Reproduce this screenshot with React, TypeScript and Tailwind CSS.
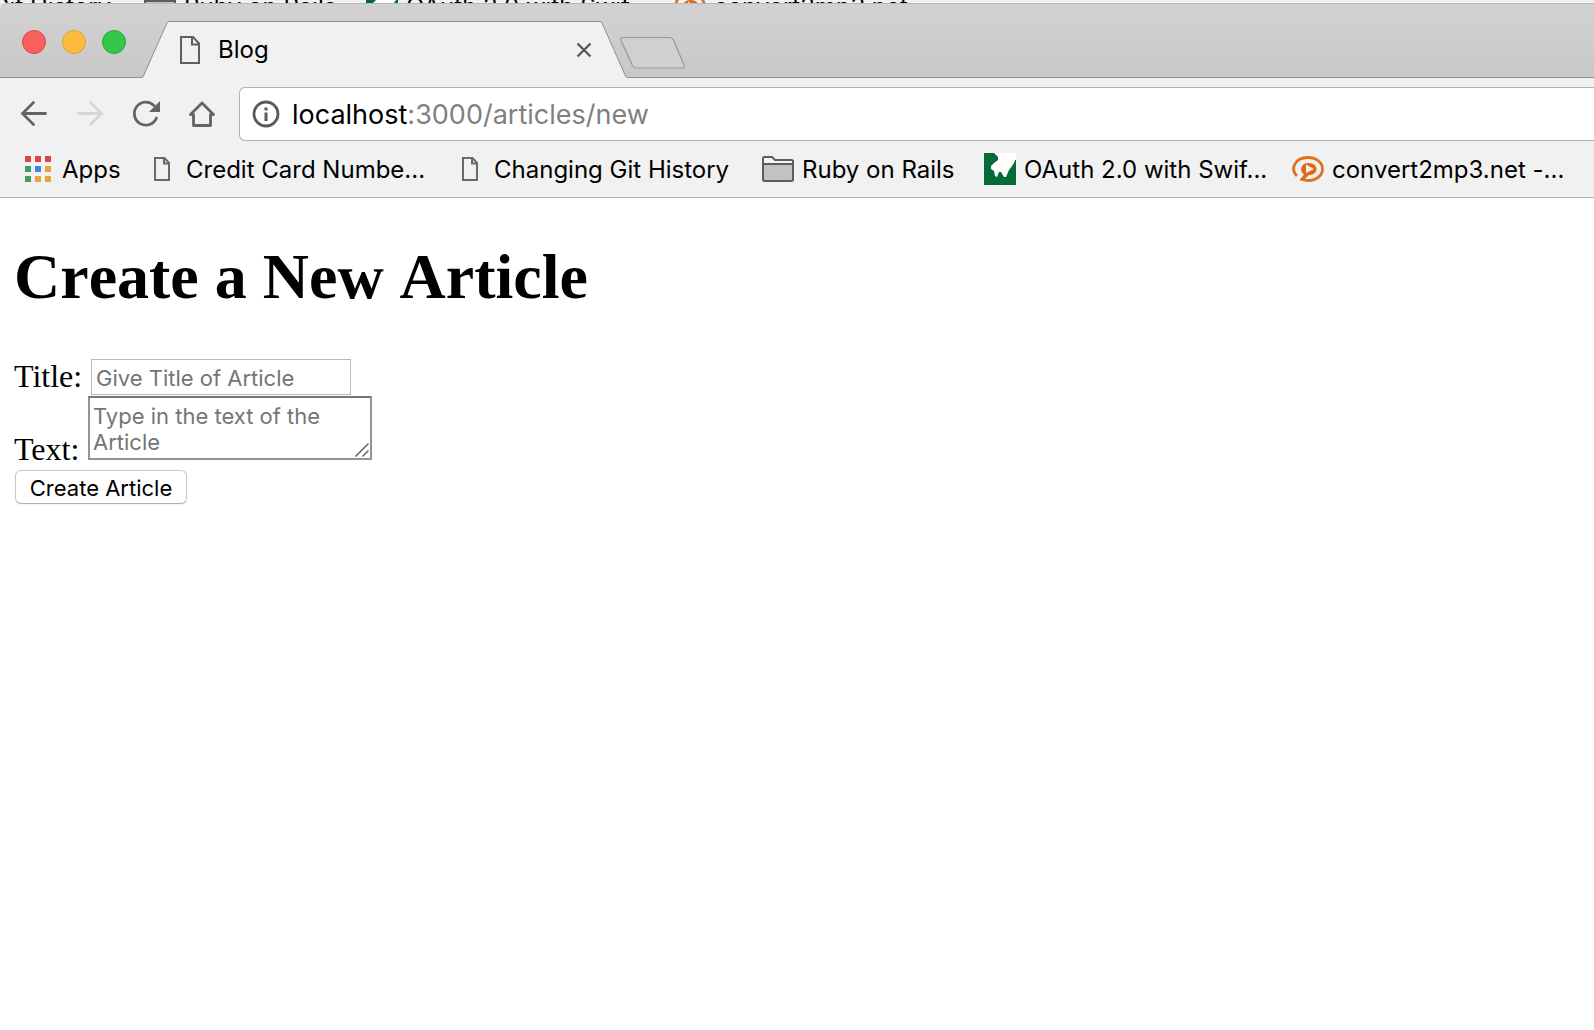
import React from "react";

function PageIcon({ className }: { className: string }) {
  return (
    <svg viewBox="0 0 20 28" className={className} fill="none" stroke="#5f5f5f" strokeWidth="2" aria-hidden="true">
      <path d="M1 1H13L19 7.500V27H1Z" />
      <path d="M12 1V8.500H19" />
    </svg>
  );
}

function SmallPageIcon() {
  return (
    <svg viewBox="0 0 16 24" className="h-6 w-4 shrink-0" fill="none" stroke="#6a6a6a" strokeWidth="2" aria-hidden="true">
      <path d="M1 1H10.500L15 6V23H1Z" />
      <path d="M10 1V6.500H15" />
    </svg>
  );
}

function AppsIcon() {
  const dots = [
    [0, 0, "#e04343"], [10, 0, "#e04343"], [20, 0, "#e04343"],
    [0, 10, "#459b62"], [10, 10, "#3a8be0"], [20, 10, "#e8a33a"],
    [0, 20, "#459b62"], [10, 20, "#e8a33a"], [20, 20, "#e8a33a"],
  ] as const;
  return (
    <svg viewBox="0 0 26 26" className="size-[26px] shrink-0" aria-hidden="true">
      {dots.map(([x, y, c]) => (
        <rect key={`${x}-${y}`} x={x} y={y} width="6" height="6" fill={c} />
      ))}
    </svg>
  );
}

function FolderIcon() {
  return (
    <svg viewBox="0 0 32 26" className="h-[26px] w-8 shrink-0" aria-hidden="true">
      <path d="M1 8V2.500Q1 1 2.500 1H10L13 4H29.500Q31 4 31 5.500V8Z" fill="#f4f4f4" />
      <path d="M1 8H31V23.500Q31 25 29.500 25H2.500Q1 25 1 23.500Z" fill="#c2c2c2" />
      <path d="M1 2.500Q1 1 2.500 1H10L13 4H29.500Q31 4 31 5.500V23.500Q31 25 29.500 25H2.500Q1 25 1 23.500ZM1 8H31" fill="none" stroke="#5c5c5c" strokeWidth="2" />
    </svg>
  );
}

function WolfIcon() {
  return (
    <svg viewBox="0 0 32 32" className="size-8 shrink-0" aria-hidden="true">
      <rect width="32" height="32" fill="#046a38" />
      <path d="M10 0L12 2L14 4V7L10 10L7 13V16L10 18L11 23L13 24L15 19H17L20 24H22L25 17L28 13L30 10L31 7H32V0Z" fill="#fff" />
    </svg>
  );
}

function ConvertIcon() {
  return (
    <svg viewBox="0 0 32 26" className="h-[26px] w-8 shrink-0" aria-hidden="true">
      <path d="M5 20C-1.500 14 1.500 1.500 16 1.500C25 1.500 30.500 7 30.500 13C30.500 19.500 24.500 24.500 16.500 24.500C14 24.500 12 24.200 10 23.500L15 18.500" fill="none" stroke="#de731f" strokeWidth="2.800" />
      <path d="M12 18.500C7 15 8.500 7 16.500 7C22 7 24.500 10 24.500 13C24.500 17 21 19 17 19L11 24.500L8 24Z" fill="#de6a17" />
      <path d="M14 8.500L22 13L14 17Z" fill="#f6efe9" />
    </svg>
  );
}

type Bookmark = { label: string; icon: React.ReactNode; item: string };

const bookmarks: Bookmark[] = [
  { label: "Credit Card Numbe...", icon: <SmallPageIcon />, item: "w-[308px] gap-4" },
  { label: "Changing Git History", icon: <SmallPageIcon />, item: "w-[300px] gap-4" },
  { label: "Ruby on Rails", icon: <FolderIcon />, item: "w-[222px] gap-2" },
  { label: "OAuth 2.0 with Swif...", icon: <WolfIcon />, item: "w-[308px] gap-2" },
  { label: "convert2mp3.net -...", icon: <ConvertIcon />, item: "w-[296px] gap-2" },
];

function BookmarkList({ items }: { items: Bookmark[] }) {
  return (
    <>
      {items.map((b) => (
        <a key={b.label} href="#" className={`flex shrink-0 items-center whitespace-nowrap ${b.item}`}>
          {b.icon}
          <span className="pt-0.5">{b.label}</span>
        </a>
      ))}
    </>
  );
}

export default function App() {
  return (
    <div className="min-h-screen overflow-hidden bg-white font-['Inter',sans-serif] text-black">
      <div className="h-[3px] overflow-hidden bg-[#f1f1f1]" aria-hidden="true">
        <div className="-mt-[22px] -ml-[156px] flex h-14 items-center text-2xl">
          <BookmarkList items={bookmarks.slice(1)} />
        </div>
      </div>

      <div className="bg-[#e4e4e4]">
        <header className="flex h-[75px] items-end rounded-tl-lg border-t border-[#b8b8b8] bg-linear-to-b from-[#d2d2d2] to-[#c8c8c9]">
          <div className="flex h-full w-[142px] shrink-0 gap-4 border-b border-[#8f8f8f] pt-[26px] pl-[22px]">
            <button aria-label="Close window" className="size-6 rounded-full border border-[#e0443f] bg-[#fc605c]" />
            <button aria-label="Minimize window" className="size-6 rounded-full border border-[#dfa035] bg-[#fdbc40]" />
            <button aria-label="Zoom window" className="size-6 rounded-full border border-[#27aa35] bg-[#34c84a]" />
          </div>
          <svg viewBox="0 0 27 57" className="h-[57px] w-[27px] shrink-0" aria-hidden="true">
            <path d="M0 57V56.500Q1 56 1.500 55L24.500 3Q25.500 0.500 27 0.500V57Z" fill="#f1f1f1" />
            <path d="M0 56.500Q1 56 1.500 55L24.500 3Q25.500 0.500 27 0.500" fill="none" stroke="#8f8f8f" />
          </svg>
          <div className="flex h-[57px] w-[431px] shrink-0 items-center border-t border-[#8f8f8f] bg-[#f1f1f1] pl-[11px]">
            <PageIcon className="h-7 w-5" />
            <span className="ml-[18px] flex-1 text-2xl">Blog</span>
            <button aria-label="Close tab" className="mr-2">
              <svg viewBox="0 0 16 16" className="size-4" stroke="#5a5a5a" strokeWidth="2.400" aria-hidden="true">
                <path d="M1.500 1.500L14.500 14.500M14.500 1.500L1.500 14.500" />
              </svg>
            </button>
          </div>
          <svg viewBox="0 0 27 57" className="h-[57px] w-[27px] shrink-0" aria-hidden="true">
            <path d="M0 57V0.500Q1.500 0.500 2.500 3L25.500 55Q26 56 27 56.500V57Z" fill="#f1f1f1" />
            <path d="M0 0.500Q1.500 0.500 2.500 3L25.500 55Q26 56 27 56.500" fill="none" stroke="#8f8f8f" />
          </svg>
          <div className="flex h-full flex-1 items-start border-b border-[#8f8f8f] pt-[33px]">
            <button aria-label="New tab" className="-ml-[7px]">
              <svg viewBox="0 0 66 32" className="h-8 w-[66px]" aria-hidden="true">
                <path d="M3 0.500H49Q52 0.500 53.500 3L64 28Q65.500 31 62 31H17Q14 31 12.500 28.500L1 3.500Q0 0.500 3 0.500Z" fill="#d0d0d0" stroke="#989898" strokeWidth="1.200" />
              </svg>
            </button>
          </div>
        </header>
      </div>

      <div className="bg-[#f1f1f1]">
        <nav className="flex h-[63px] items-end pl-5">
          <div className="flex h-[54px] w-[219px] shrink-0 items-center">
            <button aria-label="Back">
              <svg viewBox="0 0 28 28" className="size-7" fill="none" stroke="#646464" strokeWidth="2.800" strokeLinecap="round" aria-hidden="true">
                <path d="M25.500 13.500H2.500M13.500 2.500L2.500 13.500L13.500 24.500" />
              </svg>
            </button>
            <button aria-label="Forward" className="ml-7">
              <svg viewBox="0 0 28 28" className="size-7" fill="none" stroke="#d6d6d6" strokeWidth="2.800" strokeLinecap="round" aria-hidden="true">
                <path d="M2.500 13.500H25.500M14.500 2.500L25.500 13.500L14.500 24.500" />
              </svg>
            </button>
            <button aria-label="Reload" className="ml-7">
              <svg viewBox="0 0 30 28" className="h-7 w-[30px]" aria-hidden="true">
                <path d="M24.500 18A11.500 11.500 0 1 1 22 5.500" fill="none" stroke="#646464" strokeWidth="2.800" strokeLinecap="round" />
                <path d="M28 1V12H17Z" fill="#646464" />
              </svg>
            </button>
            <button aria-label="Home" className="ml-[26px]">
              <svg viewBox="0 0 28 28" className="size-7" fill="none" stroke="#646464" strokeWidth="2.800" strokeLinejoin="round" aria-hidden="true">
                <path d="M14 3L2.500 14.500H5.500V25.500H22.500V14.500H25.500Z" />
              </svg>
            </button>
          </div>
          <div className="flex h-[54px] flex-1 items-center rounded-l-md border border-r-0 border-[#b3b3b3] bg-white pl-3">
            <svg viewBox="0 0 28 28" className="size-7 shrink-0" aria-hidden="true">
              <circle cx="14" cy="14" r="12" fill="none" stroke="#5a5a5a" strokeWidth="2.800" />
              <path d="M14 12.500V21M14 7.500V10.500" stroke="#5a5a5a" strokeWidth="3" />
            </svg>
            <button aria-label="Address" className="ml-3 pt-0.5 text-[27px]">
              localhost<span className="text-[#808080]">:3000/articles/new</span>
            </button>
          </div>
        </nav>
        <nav aria-label="Bookmarks" className="flex h-[57px] items-center border-b border-[#b3b3b3] pl-[25px] text-2xl">
          <a href="#" className="flex w-[129px] shrink-0 items-center gap-[11px]">
            <AppsIcon />
            <span className="pt-0.5">Apps</span>
          </a>
          <BookmarkList items={bookmarks} />
        </nav>
      </div>

      <main className="px-3.5 pt-[42px] font-['Liberation_Serif',serif]">
        <h1 className="text-[64px] leading-[74px] font-bold [font-kerning:none]">Create a New Article</h1>
        <form className="mt-[45px] text-[32px]" onSubmit={(e) => e.preventDefault()}>
          <div className="flex items-start">
            <label htmlFor="title" className="w-[77px] leading-[34px]">Title:</label>
            <input
              id="title"
              type="text"
              placeholder="Give Title of Article"
              className="h-9 w-[260px] border border-[#b9b9b9] bg-white px-1 pt-0.5 font-['Inter',sans-serif] text-[22px] placeholder:text-[#757575]"
            />
          </div>
          <div className="flex items-end">
            <label htmlFor="text" className="w-[74px] leading-[22px]">Text:</label>
            <div className="relative mt-px h-16 w-[284px]">
              <textarea
                id="text"
                placeholder="Type in the text of the Article"
                className="size-full resize-none overflow-hidden border-2 border-[#949494] border-t-[#767676] bg-white px-[3px] pt-[5px] font-['Inter',sans-serif] text-[22px] leading-[26px] placeholder:text-[#757575]"
              />
              <svg viewBox="0 0 14 14" className="absolute right-[3px] bottom-[3px] size-3.5" stroke="#606060" strokeWidth="1.500" strokeLinecap="round" aria-hidden="true">
                <path d="M1 13L13 1M8 13L13 8" />
              </svg>
            </div>
          </div>
          <button
            type="submit"
            className="mt-2.5 ml-px flex h-[34px] w-[172px] items-center justify-center rounded-md border border-[#c8c8c8] border-b-[#b0b0b0] bg-white pt-0.5 font-['Inter',sans-serif] text-[22px] whitespace-nowrap shadow-xs"
          >
            Create Article
          </button>
        </form>
      </main>
    </div>
  );
}
